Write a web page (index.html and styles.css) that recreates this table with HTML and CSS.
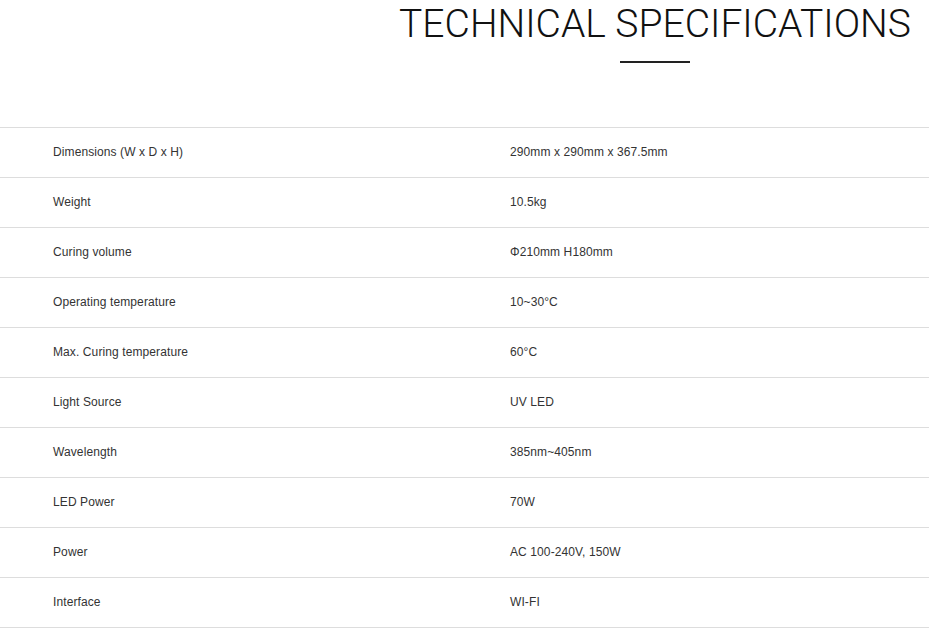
FILE: index.html
```html
<!DOCTYPE html>
<html>
<head>
<meta charset="utf-8">
<link rel="stylesheet" href="styles.css">
</head>
<body>
<header class="head">
  <h1 class="title">TECHNICAL SPECIFICATIONS</h1>
  <div class="rule"></div>
</header>
<div class="specs">
  <div class="row"><div class="k">Dimensions (W x D x H)</div><div class="v">290mm x 290mm x 367.5mm</div></div>
  <div class="row"><div class="k">Weight</div><div class="v">10.5kg</div></div>
  <div class="row"><div class="k">Curing volume</div><div class="v">Φ210mm H180mm</div></div>
  <div class="row"><div class="k">Operating temperature</div><div class="v">10~30°C</div></div>
  <div class="row"><div class="k">Max. Curing temperature</div><div class="v">60°C</div></div>
  <div class="row"><div class="k">Light Source</div><div class="v">UV LED</div></div>
  <div class="row"><div class="k">Wavelength</div><div class="v">385nm~405nm</div></div>
  <div class="row"><div class="k">LED Power</div><div class="v">70W</div></div>
  <div class="row"><div class="k">Power</div><div class="v">AC 100-240V, 150W</div></div>
  <div class="row"><div class="k">Interface</div><div class="v">WI-FI</div></div>
</div>
</body>
</html>
```
FILE: styles.css
```css
html, body { margin: 0; padding: 0; background: #fff; }
body { font-family: "Liberation Sans", Arial, sans-serif; color: #333; overflow: hidden; }
.head {
  margin-left: 381px;
  display: flex;
  flex-direction: column;
  align-items: center;
  padding-top: 3px;
  height: 127px;
  box-sizing: border-box;
}
.title {
  margin: 0;
  font-family: Roboto, sans-serif;
  font-weight: 300;
  font-size: 39px;
  line-height: 42px;
  color: #111;
  letter-spacing: 0;
}
.rule { width: 70px; height: 2px; background: #222; margin-top: 16px; }
.specs { border-top: 1px solid #ddd; }
.row {
  display: grid;
  grid-template-columns: 457px 1fr;
  padding-left: 53px;
  height: 49px;
  align-items: center;
  border-bottom: 1px solid #ddd;
  font-size: 12px;
  letter-spacing: 0.1px;
}
.k, .v { line-height: 14px; padding-bottom: 1px; }
```
